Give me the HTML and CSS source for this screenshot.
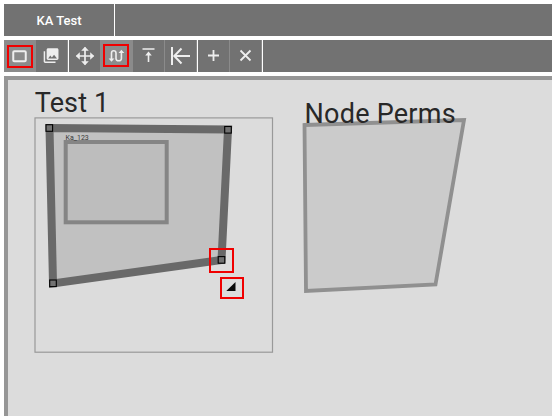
FILE: index.html
```
<!DOCTYPE html>
<html lang="en">
<head>
<meta charset="utf-8">
<title>KA Test</title>
<link rel="stylesheet" href="styles.css">
</head>
<body>
<nav class="tabs"><div class="tab">KA Test</div></nav>
<div class="toolbar">
  <div class="group group-insert">
    <button class="tool active" aria-label="Rectangle"><svg viewBox="0 0 32 32"><rect x="9.25" y="11.25" width="12.5" height="10" rx="1" fill="none" stroke="#eee" stroke-width="2"/></svg><span class="mark mark-tool"></span></button>
    <button class="tool" aria-label="Images"><svg viewBox="0 0 32 32"><path transform="translate(6.200 6.700) scale(.74)" fill="#eee" d="M22 16V4c0-1.100-.9-2-2-2H8c-1.100 0-2 .9-2 2v12c0 1.100.9 2 2 2h12c1.100 0 2-.9 2-2zm-11-4l2.030 2.710L16 11l4 5H8l3-4zM2 6v14c0 1.100.9 2 2 2h14v-2H4V6H2z"/></svg></button>
  </div>
  <div class="group group-edit">
    <button class="tool" aria-label="Move"><svg viewBox="0 0 32 32"><path fill="none" stroke="#eee" stroke-width="1.700" d="M7.500 16h17M16 7.500v17"/><path fill="#eee" d="M16 6.800l3.800 4h-7.600zM16 25.200l3.800-4h-7.600zM6.800 16l4-3.800v7.600zM25.200 16l-4-3.800v7.600z"/></svg></button>
    <button class="tool active" aria-label="Edit path"><svg viewBox="0 0 32 32"><path fill="none" stroke="#eee" stroke-width="1.600" d="M10.500 19v-6q0-2.200 2.200-2.200T15 13v5.500q0 2.300 2.700 2.300t2.700-2.300V12"/><path fill="#eee" d="M20.400 9.800l2.900 3.300h-5.800zM10.500 21.700l2.900-3.300H7.600z"/></svg><span class="mark mark-path"></span></button>
    <button class="tool" aria-label="Align top"><svg viewBox="0 0 32 32"><path fill="none" stroke="#eee" stroke-width="1.600" d="M9.500 9h12M15.500 13v9"/><path fill="#eee" d="M15.500 11.500l3.300 4h-6.600z"/></svg></button>
    <button class="tool" aria-label="Align left"><svg viewBox="0 0 32 32"><path fill="none" stroke="#eee" stroke-width="2" d="M7 7v18M10 16h15M16.500 8.500L9.300 16l7.200 7.500"/></svg></button>
  </div>
  <div class="group group-view">
    <button class="tool" aria-label="Add"><svg viewBox="0 0 32 32"><path fill="none" stroke="#eee" stroke-width="1.800" d="M10 15.500h11M15.500 10v11"/></svg></button>
    <button class="tool" aria-label="Remove"><svg viewBox="0 0 32 32"><path fill="none" stroke="#eee" stroke-width="1.800" d="M10.500 10.500l10 10M20.500 10.500l-10 10"/></svg></button>
  </div>
  <div class="rest"></div>
</div>
<main class="canvas">
  <svg class="scene" viewBox="8 80 544 336">
    <rect x="35" y="117.900" width="237.500" height="234.300" fill="none" stroke="#999" stroke-width="1.200"/>
    <text class="title" x="34.700" y="111.800" textLength="74.500">Test 1</text>
    <path d="M49.500 128L228 129.500L221.500 260L53 283.500Z" fill="#c1c1c1" stroke="#696969" stroke-width="8"/>
    <rect x="65.700" y="142" width="101" height="80.300" fill="#bdbdbd" stroke="#858585" stroke-width="4"/>
    <text class="label" x="65.500" y="140" textLength="23.300">Ka_123</text>
    <g fill="#727272" stroke="#000" stroke-width="1.100">
      <rect x="46" y="124.700" width="6.600" height="6.600"/>
      <rect x="224.700" y="126.500" width="6.600" height="6.600"/>
      <rect x="218.200" y="256.600" width="6.600" height="6.600"/>
      <rect x="49.700" y="280" width="6.600" height="6.600"/>
    </g>
    <path d="M304.500 125L464 120L435.500 284.500L306 291Z" fill="#cbcbcb" stroke="#909090" stroke-width="3.800"/>
    <text class="title" x="304.600" y="122.700" textLength="151">Node Perms</text>
    <path d="M235.500 282v9h-9.200z" fill="#080808"/>
    <g fill="none" stroke="#f00000" stroke-width="2">
      <rect x="210" y="249" width="23" height="23"/>
      <rect x="221" y="278" width="22" height="20"/>
    </g>
  </svg>
</main>
</body>
</html>
```
FILE: styles.css
```
* { box-sizing: border-box; }
body {
  margin: 0;
  height: 416px;
  padding: 4px 0 0 4px;
  display: flex;
  flex-direction: column;
  gap: 4px;
  overflow: hidden;
  background: #fff;
  font-family: Roboto, sans-serif;
}
.tabs { height: 32px; flex: none; background: #727272; display: flex; }
.tab {
  width: 111px;
  border-right: 1px solid #fff;
  color: #fff;
  font-size: 13px;
  font-weight: 500;
  line-height: 33px;
  text-align: center;
}
.toolbar { height: 32px; flex: none; display: flex; gap: 1px; }
.group { display: flex; background: #727272; }
.group-insert { width: 64px; }
.group-edit { width: 128px; }
.group-view { width: 64px; }
.rest { flex: 1; background: #727272; }
.tool {
  position: relative;
  flex: none;
  width: 32px;
  height: 32px;
  padding: 0;
  border: 0;
  background: #727272;
  box-shadow: inset -1px 0 #8b8b8b;
}
.tool svg { display: block; width: 32px; height: 32px; }
.active { background: #8b8b8b; }
.mark { position: absolute; border: 2px solid #f00000; }
.mark-tool { left: 3px; top: 5px; width: 26px; height: 23px; }
.mark-path { left: 2px; top: 4px; width: 26px; height: 23px; }
.canvas {
  flex: 1;
  min-height: 0;
  border: solid #969696;
  border-width: 4px 0 0 4px;
  background: #dcdcdc;
}
.scene { display: block; width: 544px; height: 336px; }
.title { font-size: 27px; fill: #282828; }
.label { font-size: 7px; fill: #383838; }
```
